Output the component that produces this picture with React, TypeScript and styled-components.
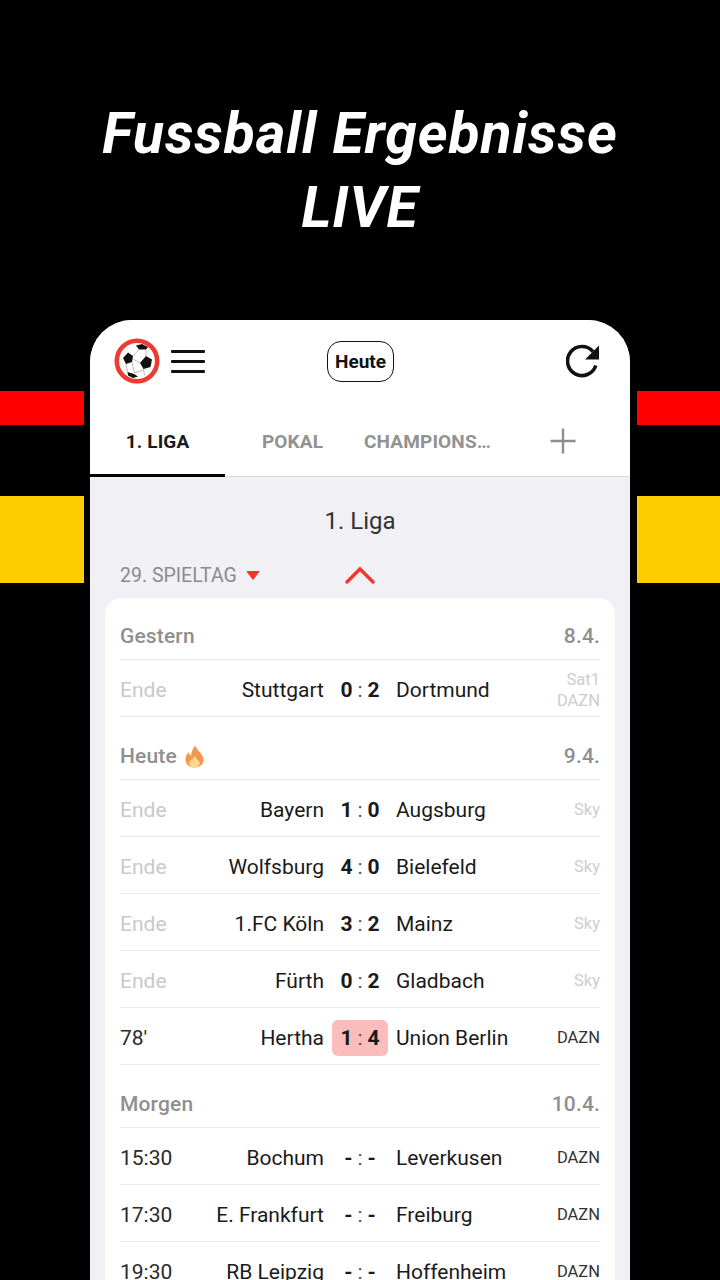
import React from "react";
import styled, { createGlobalStyle } from "styled-components";

const Global = createGlobalStyle`
  html, body { margin: 0; padding: 0; background: #000; }
  * { box-sizing: border-box; }
`;

const Page = styled.div`
  width: 720px;
  height: 1280px;
  background: #000;
  overflow: hidden;
  font-family: Roboto, "Liberation Sans", sans-serif;
`;

const Headline = styled.h1`
  margin: 0;
  height: 320px;
  padding-top: 97px;
  text-align: center;
  color: #fff;
  font-size: 57px;
  line-height: 74px;
  font-weight: 700;
  font-style: italic;
  letter-spacing: 0.96px;
`;

const Stage = styled.div`
  display: grid;
  grid-template-columns: 84px 1fr 83px;
  width: 720px;
`;

const Side = styled.div`
  display: flex;
  flex-direction: column;
  padding-top: 71px;
`;

const Stripe = styled.div<{ $color: string; $h: number; $mt?: number }>`
  height: ${(p) => p.$h}px;
  margin-top: ${(p) => p.$mt ?? 0}px;
  background: ${(p) => p.$color};
`;

const Phone = styled.div`
  width: 540px;
  margin-left: 6px;
  height: 960px;
  background: #f1f1f5;
  border-radius: 42px 42px 0 0;
  overflow: hidden;
`;

const TopBar = styled.div`
  height: 82px;
  background: #fff;
  display: grid;
  grid-template-columns: 213px 67px 1fr;
  align-items: center;
  padding: 0 30px 0 24px;
`;

const TopLeft = styled.div`
  display: flex;
  align-items: center;
  gap: 11px;
`;

const Burger = styled.div`
  width: 34px;
  height: 23px;
  display: flex;
  flex-direction: column;
  justify-content: space-between;
`;

const BurgerLine = styled.span`
  display: block;
  height: 3px;
  background: #111;
  border-radius: 1px;
`;

const TodayPill = styled.div`
  width: 67px;
  height: 41px;
  border: 1.5px solid #111;
  border-radius: 14px;
  display: flex;
  align-items: center;
  justify-content: center;
  font-size: 19px;
  font-weight: 700;
  color: #111;
`;

const TopRight = styled.div`
  display: flex;
  justify-content: flex-end;
`;

const Tabs = styled.div`
  height: 75px;
  background: #fff;
  display: grid;
  grid-template-columns: repeat(4, 135px);
  border-bottom: 1px solid #dcdce0;
`;

const Tab = styled.div<{ $active?: boolean }>`
  display: flex;
  align-items: center;
  justify-content: center;
  height: 75px;
  padding-top: ${(p) => (p.$active ? 6 : 3)}px;
  font-size: 19px;
  font-weight: 700;
  letter-spacing: 0.15px;
  color: ${(p) => (p.$active ? "#1a1a1a" : "#929292")};
  border-bottom: ${(p) => (p.$active ? "3px solid #000" : "none")};
`;

const LeagueTitle = styled.div`
  height: 82px;
  padding-top: 29px;
  text-align: center;
  font-size: 24px;
  line-height: 30px;
  color: #333;
`;

const MatchdayBar = styled.div`
  position: relative;
  height: 32px;
  margin-bottom: 7px;
  padding-left: 30px;
  display: flex;
  align-items: center;
  gap: 9px;
  font-size: 19.5px;
  color: #8b8b8b;
`;

const Chevron = styled.svg`
  position: absolute;
  left: 255px;
  top: 7px;
`;

const Card = styled.div`
  margin: 0 15px;
  padding: 0 15px;
  background: #fff;
  border-radius: 16px 16px 0 0;
`;

const SectionHead = styled.div<{ $first?: boolean }>`
  height: ${(p) => (p.$first ? 62 : 63)}px;
  padding-bottom: 8px;
  display: flex;
  align-items: flex-end;
  justify-content: space-between;
  font-size: 21px;
  line-height: 30px;
  font-weight: 500;
  letter-spacing: 0.15px;
  color: #8f8f8f;
  border-bottom: 1px solid #e9e9ec;
`;

const HeadLabel = styled.span`
  display: flex;
  align-items: center;
  gap: 7px;
`;

const Row = styled.div`
  height: 57px;
  padding-top: 3px;
  display: grid;
  grid-template-columns: 90px 114px 8px 56px 8px 1fr auto;
  align-items: center;
  border-bottom: 1px solid #e9e9ec;
  font-size: 21px;
  color: #1a1a1a;
`;

const Status = styled.span<{ $done?: boolean }>`
  color: ${(p) => (p.$done ? "#c9c9c9" : "#2a2a2a")};
`;

const Home = styled.span`
  grid-column: 2;
  text-align: right;
  white-space: nowrap;
`;

const Score = styled.span<{ $live?: boolean }>`
  grid-column: 4;
  height: 36px;
  border-radius: 6px;
  display: flex;
  align-items: center;
  justify-content: center;
  gap: 5px;
  background: ${(p) => (p.$live ? "#fbbcbc" : "transparent")};
`;

const Goal = styled.b`
  font-weight: 700;
`;

const Sep = styled.span`
  color: #555;
`;

const Away = styled.span`
  grid-column: 6;
  white-space: nowrap;
`;

const Tv = styled.span<{ $muted?: boolean }>`
  grid-column: 7;
  text-align: right;
  font-size: 16.5px;
  line-height: 21px;
  color: ${(p) => (p.$muted ? "#cdcdcd" : "#333")};
`;

const Ball = () => (
  <svg width="46" height="46" viewBox="0 0 46 46">
    <circle cx="23" cy="23" r="20.2" fill="#fff" stroke="#ee3a30" strokeWidth="4.6" />
    <polygon points="32,18 38,21.5 36.5,29 29.5,31 26,25" fill="#111" />
    <polygon points="14,14.5 19,18 18,24 12,26 9,20" fill="#111" />
    <path d="M22 7.5 L28 6 L34 9 L32 11.5 L25 11.5Z" fill="#111" />
    <path d="M13.5 34 L20 36 L24 38.5 L19 40 L14 37.5Z" fill="#111" />
    <path d="M19 18 L25 11.5 M26 25 L19 21 M32 11.5 L32 18 M18 24 L20.5 35 M29.5 31 L30.5 37.5 M20.5 35 L29 32 M12 26 L13.5 34" stroke="#aaa" strokeWidth="0.8" fill="none" />
  </svg>
);

const Refresh = () => (
  <svg width="34" height="34" viewBox="0 0 34 34">
    <path d="M29.8 21.5 A14.5 14.5 0 1 1 27 7.6" fill="none" stroke="#111" strokeWidth="3.6" />
    <polygon points="33,1.5 33,15.5 19,15.5" fill="#111" />
  </svg>
);

const Plus = () => (
  <svg width="26" height="26" viewBox="0 0 26 26">
    <path d="M13 0.5V25.5M0.5 13H25.5" stroke="#8e8e8e" strokeWidth="2.4" />
  </svg>
);

const Flame = () => (
  <svg width="21" height="25" viewBox="0 0 22 24">
    <path d="M12 0.5 C13 6 20.5 9 20.5 15.5 C20.5 20.5 16 23.5 11 23.5 C5.5 23.5 1.5 20 1.5 15 C1.5 11.5 3.5 9 5 7.5 C5.5 9.5 6.5 10.5 7.5 11 C7.5 7 9.5 3 12 0.5Z" fill="#f5964a" />
    <path d="M11.5 11 C12 14.5 16.5 16 16.5 19 C16.5 21.5 13.5 23.5 11 23.5 C8 23.5 5.5 21.5 5.5 19 C5.5 16 10 14.5 11.5 11Z" fill="#fdd98f" />
  </svg>
);

type Match = { status: string; done?: boolean; home: string; a?: number; b?: number; away: string; tv: string[]; muted?: boolean; live?: boolean };

const sections: { label: string; date: string; flame?: boolean; rows: Match[] }[] = [
  {
    label: "Gestern",
    date: "8.4.",
    rows: [{ status: "Ende", done: true, home: "Stuttgart", a: 0, b: 2, away: "Dortmund", tv: ["Sat1", "DAZN"], muted: true }],
  },
  {
    label: "Heute",
    date: "9.4.",
    flame: true,
    rows: [
      { status: "Ende", done: true, home: "Bayern", a: 1, b: 0, away: "Augsburg", tv: ["Sky"], muted: true },
      { status: "Ende", done: true, home: "Wolfsburg", a: 4, b: 0, away: "Bielefeld", tv: ["Sky"], muted: true },
      { status: "Ende", done: true, home: "1.FC Köln", a: 3, b: 2, away: "Mainz", tv: ["Sky"], muted: true },
      { status: "Ende", done: true, home: "Fürth", a: 0, b: 2, away: "Gladbach", tv: ["Sky"], muted: true },
      { status: "78'", home: "Hertha", a: 1, b: 4, away: "Union Berlin", tv: ["DAZN"], live: true },
    ],
  },
  {
    label: "Morgen",
    date: "10.4.",
    rows: [
      { status: "15:30", home: "Bochum", away: "Leverkusen", tv: ["DAZN"] },
      { status: "17:30", home: "E. Frankfurt", away: "Freiburg", tv: ["DAZN"] },
      { status: "19:30", home: "RB Leipzig", away: "Hoffenheim", tv: ["DAZN"] },
    ],
  },
];

export default function App() {
  return (
    <Page>
      <Global />
      <Headline>
        Fussball Ergebnisse
        <br />
        LIVE
      </Headline>
      <Stage>
        <Side>
          <Stripe $color="#ff0000" $h={34} />
          <Stripe $color="#ffcc00" $h={87} $mt={71} />
        </Side>
        <Phone>
          <TopBar>
            <TopLeft>
              <Ball />
              <Burger>
                <BurgerLine />
                <BurgerLine />
                <BurgerLine />
              </Burger>
            </TopLeft>
            <TodayPill>Heute</TodayPill>
            <TopRight>
              <Refresh />
            </TopRight>
          </TopBar>
          <Tabs>
            <Tab $active>1. LIGA</Tab>
            <Tab>POKAL</Tab>
            <Tab>CHAMPIONS…</Tab>
            <Tab>
              <Plus />
            </Tab>
          </Tabs>
          <LeagueTitle>1. Liga</LeagueTitle>
          <MatchdayBar>
            29. SPIELTAG
            <svg width="14" height="9" viewBox="0 0 14 9">
              <path d="M1 0.5H13L7 8.5Z" fill="#f5362c" stroke="#f5362c" strokeLinejoin="round" />
            </svg>
            <Chevron width="30" height="18" viewBox="0 0 30 18">
              <path d="M2 16 L15 3 L28 16" fill="none" stroke="#f5362c" strokeWidth="3.4" strokeLinecap="round" />
            </Chevron>
          </MatchdayBar>
          <Card>
            {sections.map((s, i) => (
              <React.Fragment key={s.label}>
                <SectionHead $first={i === 0}>
                  <HeadLabel>
                    {s.label}
                    {s.flame && <Flame />}
                  </HeadLabel>
                  <span>{s.date}</span>
                </SectionHead>
                {s.rows.map((r) => (
                  <Row key={r.home}>
                    <Status $done={r.done}>{r.status}</Status>
                    <Home>{r.home}</Home>
                    <Score $live={r.live}>
                      <Goal>{r.a ?? "-"}</Goal>
                      <Sep>:</Sep>
                      <Goal>{r.b ?? "-"}</Goal>
                    </Score>
                    <Away>{r.away}</Away>
                    <Tv $muted={r.muted}>
                      {r.tv.map((t) => (
                        <div key={t}>{t}</div>
                      ))}
                    </Tv>
                  </Row>
                ))}
              </React.Fragment>
            ))}
          </Card>
        </Phone>
        <Side>
          <Stripe $color="#ff0000" $h={34} />
          <Stripe $color="#ffcc00" $h={87} $mt={71} />
        </Side>
      </Stage>
    </Page>
  );
}
